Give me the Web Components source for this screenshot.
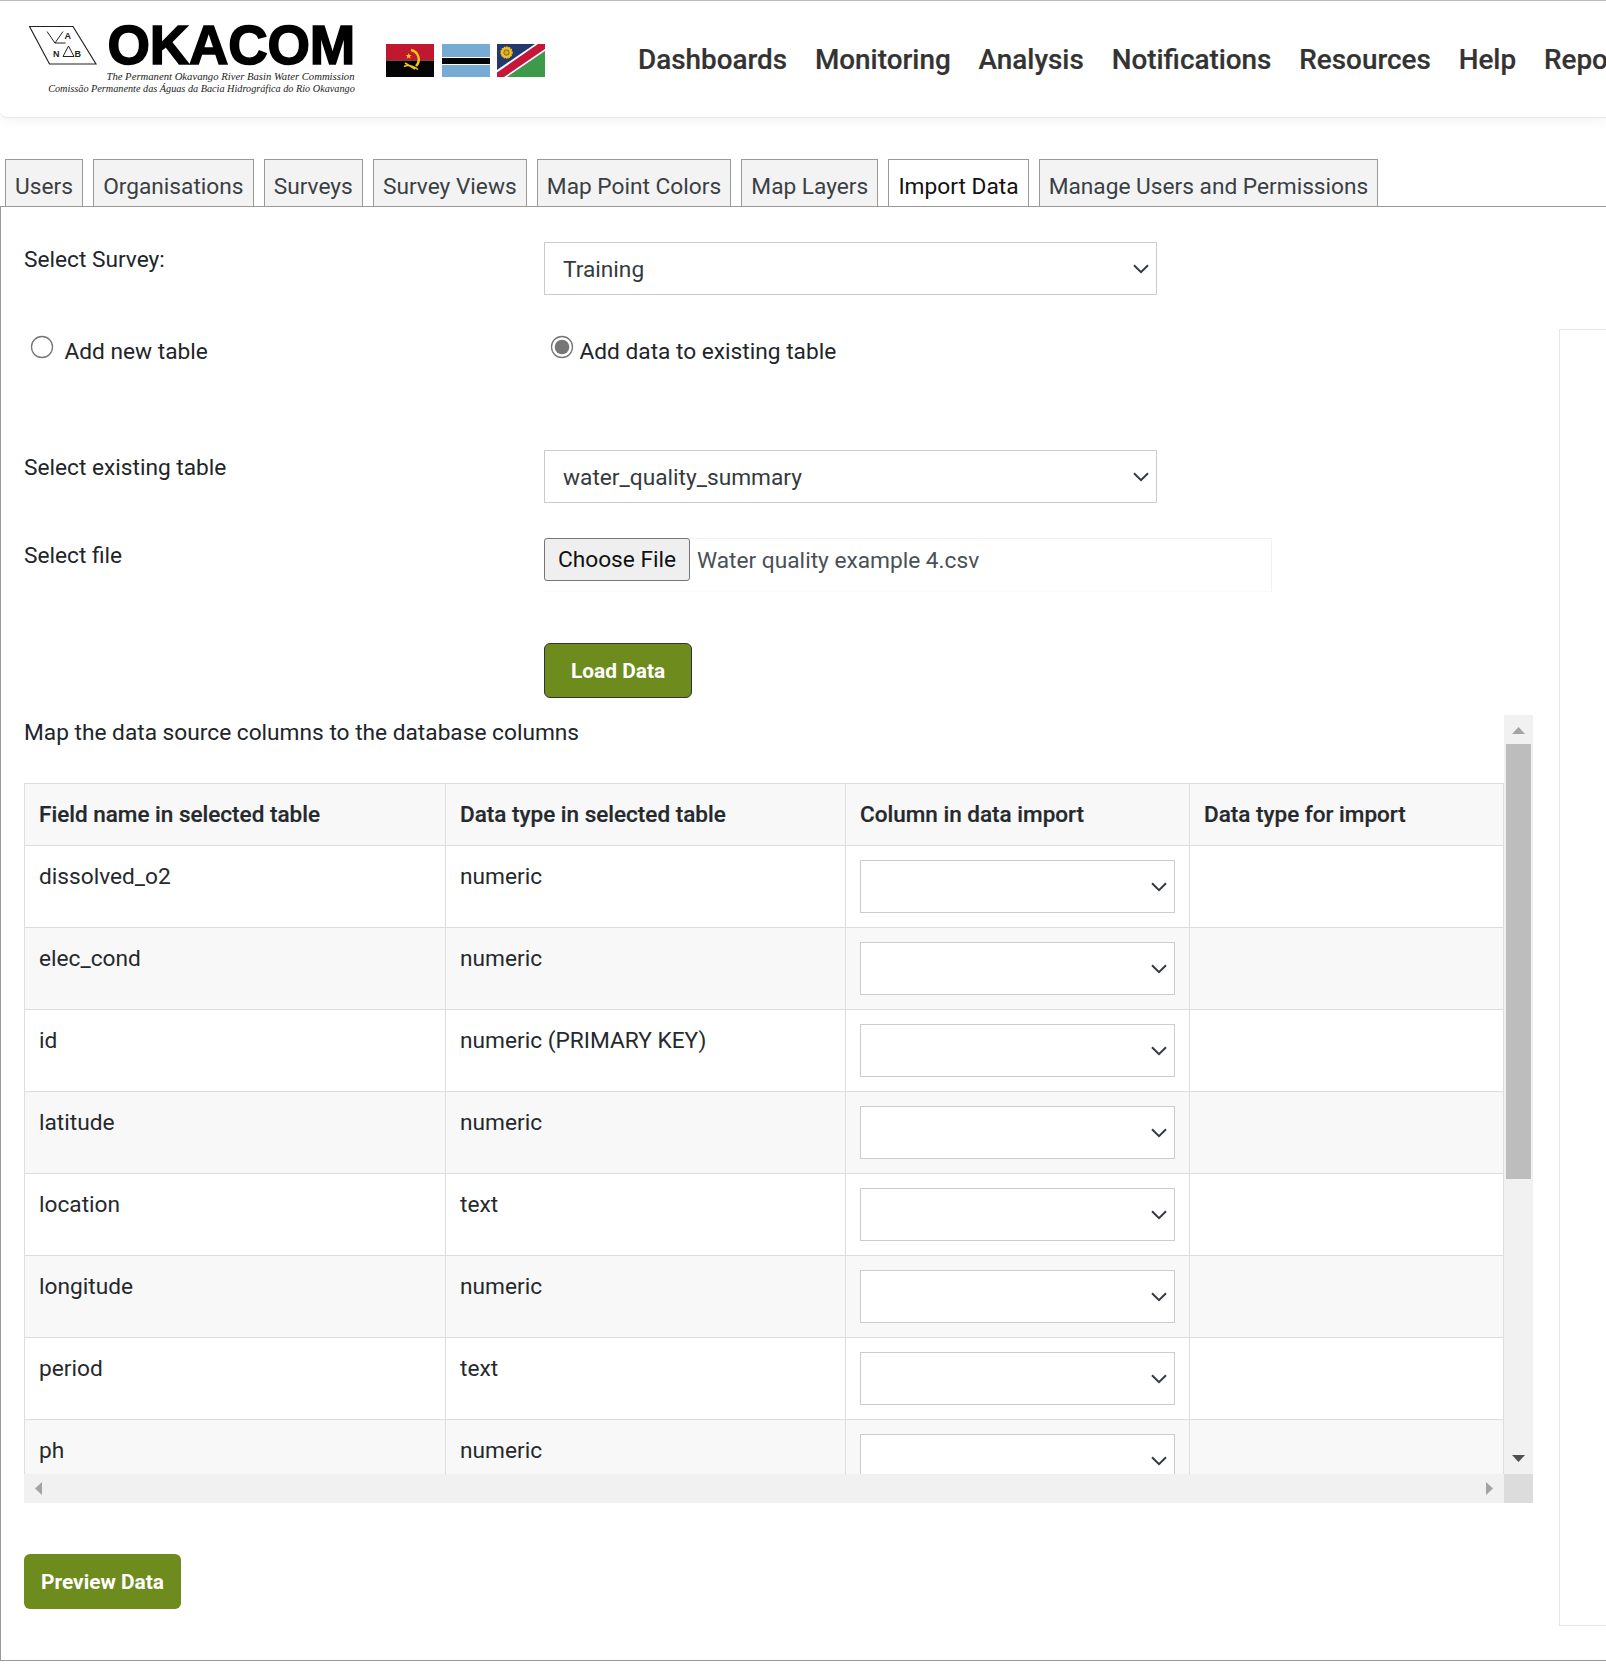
<!DOCTYPE html>
<html lang="en">
<head>
<meta charset="UTF-8">
<title>OKACOM - Import Data</title>
<style>
  html, body { margin: 0; padding: 0; background: #fff; }
  body { width: 1606px; height: 1665px; overflow: hidden; font-family: Roboto, "Liberation Sans", sans-serif; font-size: 22.7px; color: #212529; }
</style>
</head>
<body>
<oka-header></oka-header>
<oka-tabs>
  <oka-tab>Users</oka-tab>
  <oka-tab>Organisations</oka-tab>
  <oka-tab>Surveys</oka-tab>
  <oka-tab>Survey Views</oka-tab>
  <oka-tab>Map Point Colors</oka-tab>
  <oka-tab>Map Layers</oka-tab>
  <oka-tab active>Import Data</oka-tab>
  <oka-tab>Manage Users and Permissions</oka-tab>
</oka-tabs>
<import-panel>
  <form-row label="Select Survey:" style="margin-top:35px"><oka-select width="613">Training</oka-select></form-row>
  <radio-row></radio-row>
  <form-row label="Select existing table" style="margin-top:83px"><oka-select width="613">water_quality_summary</oka-select></form-row>
  <form-row label="Select file" style="margin-top:35px"><file-pick>Water quality example 4.csv</file-pick></form-row>
  <form-row style="margin-top:51px"><oka-button bordered>Load Data</oka-button></form-row>
  <map-scroll>
    <map-row head field="Field name in selected table" type="Data type in selected table" col="Column in data import" imp="Data type for import"></map-row>
    <map-row field="dissolved_o2" type="numeric"></map-row>
    <map-row field="elec_cond" type="numeric"></map-row>
    <map-row field="id" type="numeric (PRIMARY KEY)"></map-row>
    <map-row field="latitude" type="numeric"></map-row>
    <map-row field="location" type="text"></map-row>
    <map-row field="longitude" type="numeric"></map-row>
    <map-row field="period" type="text"></map-row>
    <map-row field="ph" type="numeric"></map-row>
  </map-scroll>
  <oka-button style="margin-top:51px">Preview Data</oka-button>
</import-panel>

<script>
  const chevron = `<svg width="16" height="10" viewBox="0 0 16 10"><path d="M1 1.2l7 7 7-7" fill="none" stroke="#343a40" stroke-width="2"/></svg>`;

  function define(name, html, setup) {
    customElements.define(name, class extends HTMLElement {
      constructor() {
        super();
        this.attachShadow({mode: 'open'});
      }
      connectedCallback() {
        this.shadowRoot.innerHTML = typeof html === 'function' ? html(this) : html;
        if (setup) setup(this);
      }
    });
  }

  define('oka-header', `
    <style>
      :host { display: flex; align-items: flex-start; height: 116px; box-sizing: content-box; border-top: 1px solid #bbb; border-bottom: 1px solid #e6e6ec; border-bottom-left-radius: 7px; background: #fff; box-shadow: 0 3px 12px rgba(0,0,0,.05); overflow: hidden; }
      .logo { display: block; margin: 24px 0 0 29px; flex: none; }
      .brand { width: 246px; margin-left: 12px; flex: none; }
      .name { font: 900 54.6px/40px "Liberation Sans", sans-serif; -webkit-text-stroke: 1.6px #000; color: #000; margin-top: 25px; letter-spacing: -.2px; white-space: nowrap; display: flex; justify-content: flex-end; }
      .sub { font: italic 11.3px/11.5px "Liberation Serif", serif; color: #222; white-space: nowrap; margin-top: 5px; display: flex; flex-direction: column; align-items: flex-end; }
      .sub span { display: block; flex: none; transform-origin: right center; }
      .flags { display: flex; gap: 7.5px; margin: 43px 0 0 31px; flex: none; }
      nav { display: flex; gap: 27.9px; margin: 40px 0 0 93px; font: 500 27.85px/38px Roboto, sans-serif; color: #333; white-space: nowrap; -webkit-text-stroke: .2px #333; }
    </style>
    <svg class="logo" width="68" height="41" viewBox="0 0 68 41">
      <path d="M.5 1.5h43.500l23 37.500H20.500z" fill="#fff" stroke="#222" stroke-width="1.200"/>
      <path d="M18 6.500l8 11.500 8-11.500M26 18h10.500" fill="none" stroke="#222" stroke-width="1"/>
      <path d="M39.500 21l5.500 10.500H34z" fill="none" stroke="#222" stroke-width="1"/>
      <text x="35.500" y="14" font-family="Liberation Sans" font-weight="700" font-size="9" fill="#222">A</text>
      <text x="24" y="31.500" font-family="Liberation Sans" font-weight="700" font-size="9" fill="#222">N</text>
      <text x="45.500" y="31.500" font-family="Liberation Sans" font-weight="700" font-size="9" fill="#222">B</text>
    </svg>
    <div class="brand">
      <div class="name">OKACOM</div>
      <div class="sub"><span style="transform:scaleX(.945)">The Permanent Okavango River Basin Water Commission</span><span style="transform:scaleX(.905)">Comissão Permanente das Águas da Bacia Hidrográfica do Rio Okavango</span></div>
    </div>
    <div class="flags">
      <svg width="48" height="33" viewBox="0 0 48 33">
        <rect width="48" height="16.500" fill="#c0182f"/><rect y="16.500" width="48" height="16.500" fill="#050505"/>
        <path d="M25 6a9.500 9.500 0 0 1 5 16" fill="none" stroke="#f2c71c" stroke-width="2.400"/>
        <path d="M18 22.500c4-2 9-.5 14 3M19 19l10 6" fill="none" stroke="#f2c71c" stroke-width="1.500"/>
        <path d="M22.700 9l.8 2 2.200.2-1.700 1.400.6 2.200-1.900-1.200-1.900 1.200.6-2.200-1.700-1.400 2.200-.2z" fill="#f2c71c"/>
      </svg>
      <svg width="48" height="33" viewBox="0 0 48 33">
        <rect width="48" height="33" fill="#76abd4"/><rect y="13" width="48" height="8" fill="#fff"/><rect y="14" width="48" height="6" fill="#050505"/>
      </svg>
      <svg width="48" height="33" viewBox="0 0 48 33">
        <rect width="48" height="33" fill="#23386f"/>
        <path d="M10 33L48 7v26z" fill="#3e9a4b"/>
        <path d="M0 26L38 0h10v7L10 33H0z" fill="#fff"/>
        <path d="M0 28.500L41 0h7v5L7 33H0z" fill="#c4173a"/>
        <circle cx="9.500" cy="8.500" r="5.500" fill="#f1c21a" stroke="#f1c21a" stroke-width="1.500" stroke-dasharray="1.500 1"/><circle cx="9.500" cy="8.500" r="2.700" fill="#e6a516" stroke="#23386f" stroke-width=".6"/>
      </svg>
    </div>
    <nav><span>Dashboards</span><span>Monitoring</span><span>Analysis</span><span>Notifications</span><span>Resources</span><span>Help</span><span>Reports</span></nav>
  `);

  define('oka-tabs', `
    <style>:host { display: flex; gap: 10px; margin: 41px 0 0 5px; height: 47px; position: relative; }</style>
    <slot></slot>
  `);

  define('oka-tab', el => `
    <style>
      :host { display: block; box-sizing: border-box; height: 47px; padding: 0 9.1px; border: 1px solid #999; border-bottom: 0; background: ${el.hasAttribute('active') ? '#fff' : '#f3f3f3'}; color: ${el.hasAttribute('active') ? '#111' : '#3a3f44'}; line-height: 53px; white-space: nowrap; }
    </style>
    <slot></slot>
  `);

  define('import-panel', `
    <style>
      :host { display: flex; width: 1700px; height: 1453px; box-sizing: content-box; border: 1px solid #999; border-width: 1px 0 1px 1px; }
      .main { width: 1508px; flex: none; padding-left: 23px; box-sizing: content-box; }
      aside { flex: 1; margin: 122px 0 34px 27px; border: 1px solid #e6e6e6; }
    </style>
    <div class="main"><slot></slot></div>
    <aside></aside>
  `);

  define('form-row', el => `
    <style>
      :host { display: flex; align-items: flex-start; }
      .label { width: 520px; flex: none; line-height: 28px; padding-top: 4px; }
    </style>
    <div class="label">${el.getAttribute('label') || ''}</div>
    <slot></slot>
  `);

  define('oka-select', el => `
    <style>
      :host { display: flex; align-items: center; justify-content: space-between; box-sizing: border-box; width: ${el.getAttribute('width') || 315}px; height: 53px; padding: 0 7px 0 18px; border: 1px solid #ccc; background: #fff; color: #343a40; white-space: nowrap; }
      span { margin-top: 1px; }
    </style>
    <span><slot></slot></span>${chevron}
  `);

  define('radio-row', `
    <style>
      :host { display: flex; height: 32px; margin-top: 40px; align-items: flex-start; }
      .opt { display: flex; align-items: center; line-height: 32px; }
      .one { width: 525.5px; padding-left: 5.5px; box-sizing: border-box; }
      svg { display: block; margin-top: -9px; flex: none; }
      span { padding-top: 1px; }
      .one span { margin-left: 11px; }
      .two span { margin-left: 6px; }
    </style>
    <div class="opt one"><svg width="24" height="24" viewBox="0 0 24 24"><circle cx="12" cy="12" r="10.500" fill="#fff" stroke="#767676" stroke-width="1.300"/></svg><span>Add new table</span></div>
    <div class="opt two"><svg width="24" height="24" viewBox="0 0 24 24"><circle cx="12" cy="12" r="10.500" fill="#fff" stroke="#767676" stroke-width="1.300"/><circle cx="12" cy="12" r="7.300" fill="#767676"/></svg><span>Add data to existing table</span></div>
  `);

  define('file-pick', `
    <style>
      :host { display: flex; align-items: flex-start; box-sizing: border-box; width: 728px; height: 54px; border: 1px solid #f1f1f1; border-left: 0; border-bottom-color: #fafafa; color: #495057; }
      .btn { box-sizing: border-box; width: 146px; height: 43px; margin-top: -1px; padding-bottom: 1px; border: 1px solid #767676; border-radius: 3px; background: #efefef; color: #111; display: flex; align-items: center; justify-content: center; flex: none; }
      .name { margin-left: 7px; line-height: 44px; white-space: nowrap; }
    </style>
    <div class="btn">Choose File</div>
    <div class="name"><slot></slot></div>
  `);

  define('oka-button', el => `
    <style>
      :host { display: inline-flex; align-items: center; justify-content: center; box-sizing: border-box; height: 55px; padding: 0 ${el.hasAttribute('bordered') ? 26 : 17}px; border-radius: 6px; background: #6e8b1d; color: #fff; font-weight: 700; font-size: 20.9px; ${el.hasAttribute('bordered') ? 'border: 1px solid #333;' : ''} }
    </style>
    <slot></slot>
  `);

  define('map-scroll', `
    <style>
      :host { display: grid; grid-template-columns: 1480px 29px; grid-template-rows: 759px 29px; width: 1509px; height: 788px; margin-top: 17px; }
      .view { overflow: hidden; }
      .title { height: 68px; padding-top: 3px; line-height: 29px; box-sizing: border-box; }
      .vbar { position: relative; background: #f1f1f1; }
      .thumb { position: absolute; left: 2px; right: 2px; top: 29px; height: 435px; background: #bdbdbd; }
      .hbar { position: relative; background: #f1f1f1; }
      .corner { background: #dcdcdc; }
      svg { position: absolute; display: block; }
    </style>
    <div class="view"><div class="title">Map the data source columns to the database columns</div><slot></slot></div>
    <div class="vbar">
      <svg style="left:8px;top:12px" width="13" height="7"><path d="M6.500 0L13 7H0z" fill="#a3a3a3"/></svg>
      <div class="thumb"></div>
      <svg style="left:8px;bottom:12px" width="13" height="7"><path d="M0 0h13L6.500 7z" fill="#505050"/></svg>
    </div>
    <div class="hbar">
      <svg style="left:11px;top:8px" width="7" height="13"><path d="M7 0v13L0 6.500z" fill="#a3a3a3"/></svg>
      <svg style="right:11px;top:8px" width="7" height="13"><path d="M0 0v13l7-6.500z" fill="#a3a3a3"/></svg>
    </div>
    <div class="corner"></div>
  `);

  define('map-row', el => {
    const head = el.hasAttribute('head');
    const stripe = head || rowIndex(el) % 2 === 0;
    return `
    <style>
      :host { display: grid; grid-template-columns: 421px 400px 344px 314px; height: ${head ? 63 : 82}px; width: 1480px; box-sizing: border-box; border-left: 1px solid #ddd; border-bottom: 1px solid #ddd; ${head ? 'border-top: 1px solid #ddd;' : ''} background: ${stripe ? '#f8f8f8' : '#fff'}; font-weight: ${head ? 500 : 400}; ${head ? 'font-size: 22.5px; -webkit-text-stroke: .2px #25292d;' : ''} }
      .cell { box-sizing: border-box; padding: 16px 13px 0 14px; border-right: 1px solid #ddd; line-height: 29px; white-space: nowrap; color: #25292d; overflow: hidden; }
      oka-select { margin-top: -2px; }
    </style>
    <div class="cell">${el.getAttribute('field')}</div>
    <div class="cell">${el.getAttribute('type')}</div>
    <div class="cell">${head ? el.getAttribute('col') : '<oka-select width="315"></oka-select>'}</div>
    <div class="cell">${head ? el.getAttribute('imp') : ''}</div>`;
  });

  function rowIndex(el) {
    let i = 0;
    while ((el = el.previousElementSibling)) i++;
    return i;
  }
</script>
</body>
</html>
